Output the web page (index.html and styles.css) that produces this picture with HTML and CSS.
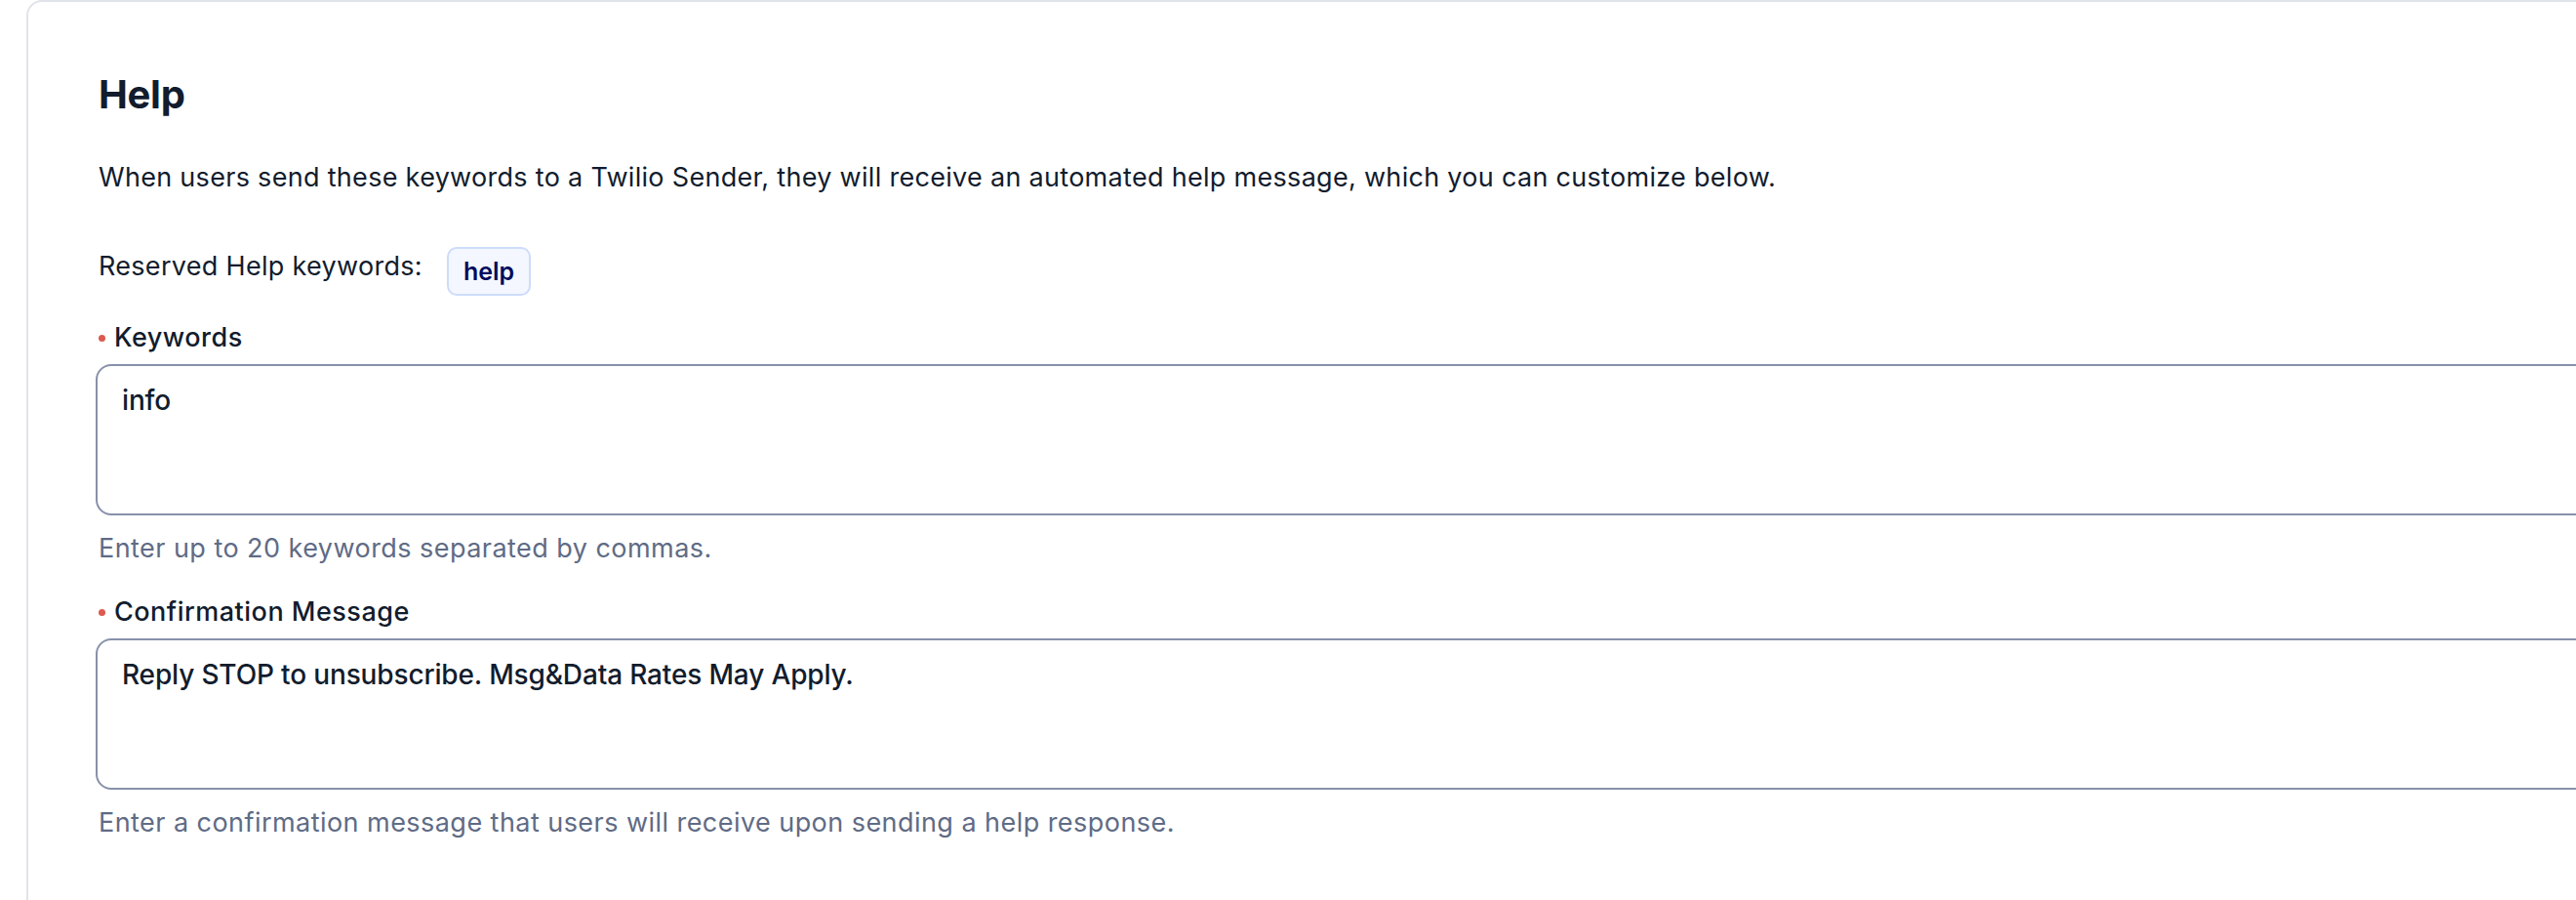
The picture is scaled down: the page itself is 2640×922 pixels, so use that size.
FILE: index.html
```html
<!DOCTYPE html>
<html lang="en">

<head>
  <meta charset="UTF-8">
  <meta name="viewport" content="width=device-width, initial-scale=1.0">
  <title>Help keywords</title>
  <link rel="stylesheet" href="styles.css">
</head>

<body>
  <div class="card">
    <h2 class="card-title">Help</h2>
    <p class="card-intro">When users send these keywords to a Twilio Sender, they will receive an automated help message, which you can customize below.</p>

    <div class="reserved">
      <span class="reserved-label">Reserved Help keywords:</span>
      <span class="badge">help</span>
    </div>

    <div class="field">
      <label class="field-label" for="keywords"><span class="required-dot"></span>Keywords</label>
      <textarea id="keywords" class="field-input">info</textarea>
      <p class="field-help">Enter up to 20 keywords separated by commas.</p>
    </div>

    <div class="field">
      <label class="field-label" for="confirmation"><span class="required-dot"></span>Confirmation Message</label>
      <textarea id="confirmation" class="field-input">Reply STOP to unsubscribe. Msg&amp;Data Rates May Apply.</textarea>
      <p class="field-help">Enter a confirmation message that users will receive upon sending a help response.</p>
    </div>
  </div>
</body>

</html>
```

FILE: styles.css
```css
html, body {
  margin: 0;
  padding: 0;
  background: #ffffff;
  overflow: hidden;
}

body {
  font-family: Inter, "Noto Sans", sans-serif;
  font-size: 27px;
  line-height: 40px;
  color: #121c2d;
}

.card {
  box-sizing: border-box;
  width: 2800px;
  min-height: 1000px;
  margin-left: 27px;
  padding: 71px 72px 0 72px;
  border: 2px solid #e1e3ea;
  border-radius: 16px;
  background: #ffffff;
}

.card-title {
  margin: 0;
  font-size: 40px;
  line-height: 48px;
  font-weight: 700;
  letter-spacing: -0.3px;
}

.card-intro {
  margin: 41px 0 0 0;
  letter-spacing: 0.3px;
}

.reserved {
  display: flex;
  align-items: flex-start;
  gap: 25px;
  margin-top: 51px;
}

.reserved-label {
  letter-spacing: 0.3px;
}

.badge {
  box-sizing: border-box;
  height: 50px;
  padding: 0 15px;
  display: inline-flex;
  align-items: center;
  background: #f4f7ff;
  border: 2px solid #cddcfb;
  border-radius: 10px;
  color: #030b5d;
  font-size: 25px;
  font-weight: 600;
}

.field {
  display: flex;
  flex-direction: column;
}

.field-label {
  display: flex;
  align-items: center;
  margin-top: 23px;
  font-weight: 500;
  letter-spacing: 0.5px;
}

.field + .field .field-label {
  margin-top: 25px;
}

.required-dot {
  width: 7px;
  height: 7px;
  margin: 0 9px 0 0;
  border-radius: 50%;
  background: #dc5a4e;
}

.field-input {
  box-sizing: border-box;
  width: calc(100% + 3px);
  height: 155px;
  margin: 7px 0 0 -3px;
  padding: 15px 25px;
  border: 2px solid #8891aa;
  border-radius: 16px;
  resize: none;
  font-family: inherit;
  font-size: 28px;
  line-height: 40px;
  font-weight: 500;
  color: #121c2d;
  background: #ffffff;
  outline: none;
  letter-spacing: -0.15px;
}

.field-help {
  margin: 14px 0 0 0;
  color: #606b85;
  letter-spacing: 0.45px;
}
```
